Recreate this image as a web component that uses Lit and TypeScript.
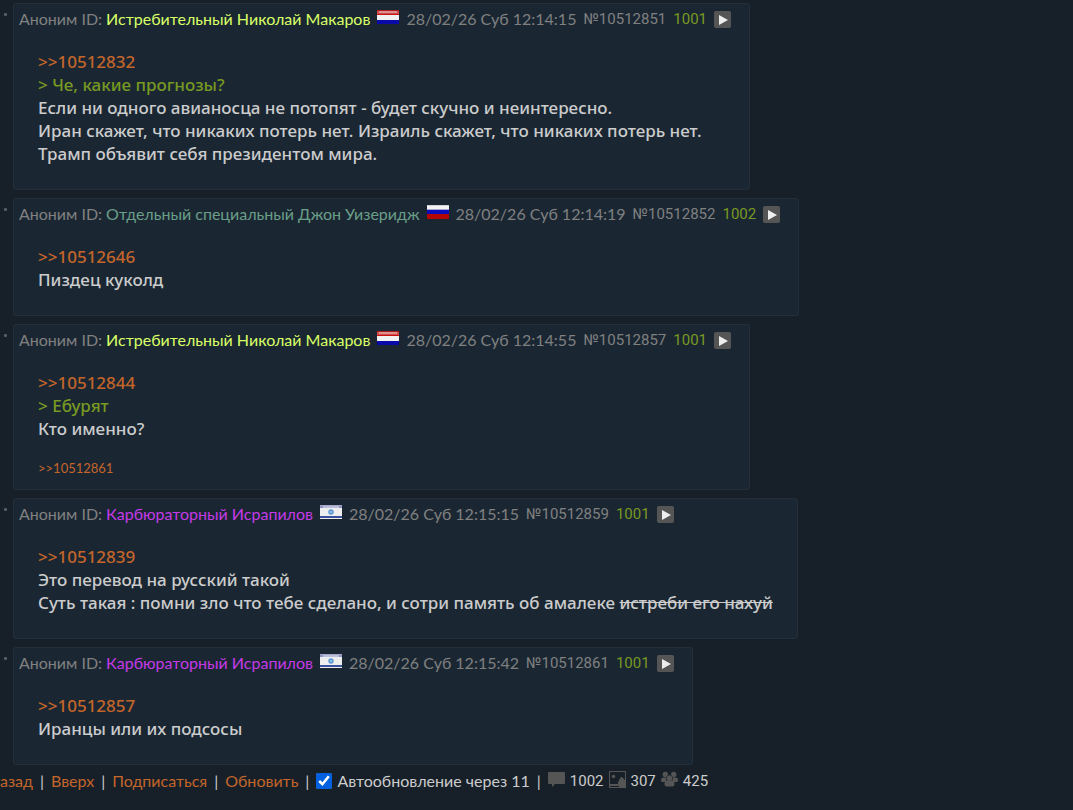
import { LitElement, html, svg, css } from "lit";
import { customElement, property, state } from "lit/decorators.js";
import { classMap } from "lit/directives/class-map.js";

type Kind = "ref" | "quote" | "text";
interface Line { kind: Kind; text: string; struck?: string }
interface Post {
  id: string; order: number; name: string; tone: "lime" | "sage" | "violet";
  flag: "nl" | "ru" | "il"; time: string; lines: Line[]; replies?: string[];
}

const ref = (text: string): Line => ({ kind: "ref", text });
const quote = (text: string): Line => ({ kind: "quote", text });
const text = (t: string, struck?: string): Line => ({ kind: "text", text: t, struck });

const POSTS: Post[] = [
  {
    id: "10512851", order: 1001, name: "Истребительный Николай Макаров", tone: "lime", flag: "nl",
    time: "28/02/26 Суб 12:14:15",
    lines: [
      ref("10512832"),
      quote("Че, какие прогнозы?"),
      text("Если ни одного авианосца не потопят - будет скучно и неинтересно."),
      text("Иран скажет, что никаких потерь нет. Израиль скажет, что никаких потерь нет."),
      text("Трамп объявит себя президентом мира."),
    ],
  },
  {
    id: "10512852", order: 1002, name: "Отдельный специальный Джон Уизеридж", tone: "sage", flag: "ru",
    time: "28/02/26 Суб 12:14:19",
    lines: [ref("10512646"), text("Пиздец куколд")],
  },
  {
    id: "10512857", order: 1001, name: "Истребительный Николай Макаров", tone: "lime", flag: "nl",
    time: "28/02/26 Суб 12:14:55",
    lines: [ref("10512844"), quote("Ебурят"), text("Кто именно?")],
    replies: ["10512861"],
  },
  {
    id: "10512859", order: 1001, name: "Карбюраторный Исрапилов", tone: "violet", flag: "il",
    time: "28/02/26 Суб 12:15:15",
    lines: [
      ref("10512839"),
      text("Это перевод на русский такой"),
      text("Суть такая : помни зло что тебе сделано, и сотри память об амалеке ", "истреби его нахуй"),
    ],
  },
  {
    id: "10512861", order: 1001, name: "Карбюраторный Исрапилов", tone: "violet", flag: "il",
    time: "28/02/26 Суб 12:15:42",
    lines: [ref("10512857"), text("Иранцы или их подсосы")],
  },
];

const FLAGS = {
  nl: svg`<rect width="22" height="5" fill="#d04a4a"/><rect width="22" height="1" fill="#b01c1c"/>
    <rect x="2" y="1" width="18" height="2" fill="#dd8f8f"/><rect y="4" width="22" height="1" fill="#c41414"/>
    <rect y="5" width="22" height="5" fill="#f1f1f1"/><rect y="10" width="22" height="4" fill="#0a0aa8"/>`,
  ru: svg`<rect width="22" height="5" fill="#f3f3f3"/><rect width="22" height="1" fill="#d2d2d2"/>
    <rect y="5" width="22" height="5" fill="#0d0dba"/><rect y="4" width="22" height="1" fill="#a9a9d8"/>
    <rect y="9" width="22" height="5" fill="#b30505"/>`,
  il: svg`<rect width="22" height="14" fill="#eeeeee"/><rect width="22" height="1" fill="#a9a4c4"/>
    <rect y="1" width="22" height="2" fill="#8d93c0"/><rect x="3" y="1" width="16" height="2" fill="#b9bedb"/>
    <rect y="11" width="22" height="2" fill="#3c50a0"/>
    <circle cx="11" cy="7" r="2" fill="#8ebbe6" stroke="#5b96d2" stroke-width="1.4"/>`,
};

@customElement("thread-post")
class ThreadPost extends LitElement {
  @property({ attribute: false }) post!: Post;

  static styles = css`
    :host { display: flex; align-items: flex-start; }
    a { color: #c4652a; text-decoration: none; }
    .mark { width: 3px; height: 3px; margin: 10px 6px 0 4px; flex: none; border-radius: 1px; background: #565d63; }
    .card {
      border: 1px solid #23303c; border-radius: 3px; background: #1a2733;
      padding: 3px 18px 0 5px; min-width: 0;
    }
    .head {
      display: flex; flex-wrap: wrap; align-items: center; column-gap: 7px;
      font: 16px/24px Lato, "Open Sans", sans-serif; color: #808080;
    }
    .who { display: flex; gap: 4px; }
    .lime { color: #d9ff66; }
    .sage { color: #6b9e88; }
    .violet { color: #c43ae6; }
    .flag { width: 22px; height: 14px; display: block; margin-bottom: 4px; }
    .num { font: 15px/24px Roboto, sans-serif; }
    .order { color: #789922; }
    .menu {
      width: 17px; height: 17px; padding: 0; border: 0; border-radius: 2px;
      background: #555; display: block; cursor: pointer;
    }
    .menu svg { display: block; width: 17px; height: 17px; }
    .body {
      margin: 19px 6px 24px 19px; color: #ccc;
      font: 500 17px/23px "Noto Sans", sans-serif;
    }
    .with-replies { margin-bottom: 20px; }
    .line { margin: 0; }
    .quote { color: #789922; }
    .replies { margin: 0 0 13px 19px; font: 13px/16px Lato, sans-serif; }
  `;

  private line(l: Line) {
    if (l.kind === "ref") return html`<p class="line"><a href="#${l.text}">&gt;&gt;${l.text}</a></p>`;
    if (l.kind === "quote") return html`<p class="line quote">&gt; ${l.text}</p>`;
    return html`<p class="line">${l.text}${l.struck ? html`<s>${l.struck}</s>` : ""}</p>`;
  }

  render() {
    const p = this.post;
    return html`
      <span class="mark"></span>
      <article class="card">
        <header class="head">
          <span class="who"><span>Аноним ID:</span><span class=${p.tone}>${p.name}</span></span>
          <svg class="flag" viewBox="0 0 22 14" aria-hidden="true">${FLAGS[p.flag]}</svg>
          <time>${p.time}</time>
          <span class="num">№${p.id}</span>
          <span class="num order">${p.order}</span>
          <button class="menu" type="button" aria-label="Меню поста">
            <svg viewBox="0 0 17 17" aria-hidden="true"><path d="M5 4v10l9-5z" fill="#eee"/></svg>
          </button>
        </header>
        <div class=${classMap({ body: true, "with-replies": !!p.replies })}>${p.lines.map((l) => this.line(l))}</div>
        ${p.replies
          ? html`<div class="replies">${p.replies.map((r) => html`<a href="#${r}">&gt;&gt;${r}</a>`)}</div>`
          : ""}
      </article>`;
  }
}

@customElement("app-root")
class AppRoot extends LitElement {
  @state() private auto = true;

  static styles = css`
    :host { display: block; min-height: 100vh; box-sizing: border-box; padding-top: 3px; background: #172029; overflow-x: hidden; }
    .posts { display: flex; flex-direction: column; gap: 8px; }
    .bar {
      display: flex; flex-wrap: wrap; align-items: center; gap: 7px;
      margin: 4px 0 0 -12px; color: #ccc; font: 16px/24px Lato, "Open Sans", sans-serif;
    }
    .bar a { color: #c4652a; text-decoration: none; }
    .auto, .stats, .stat { display: flex; align-items: center; gap: 5px; }
    .stat { font: 15px/24px Roboto, sans-serif; }
    .auto input { width: 16px; height: 16px; margin: 0; accent-color: #0060df; }
    .icon { width: 17px; height: 17px; display: block; fill: #555; margin-bottom: 3px; }
  `;

  render() {
    const sep = html`<span>|</span>`;
    return html`
      <main class="posts">${POSTS.map((p) => html`<thread-post .post=${p}></thread-post>`)}</main>
      <nav class="bar">
        <a href="#back">Назад</a>${sep}
        <a href="#top">Вверх</a>${sep}
        <a href="#follow">Подписаться</a>${sep}
        <a href="#update">Обновить</a>${sep}
        <label class="auto">
          <input type="checkbox" .checked=${this.auto}
            @change=${(e: Event) => (this.auto = (e.target as HTMLInputElement).checked)} />
          <span>Автообновление через 11</span>
        </label>${sep}
        <span class="stats">
          <span class="stat">
            <svg class="icon" viewBox="0 0 17 17" aria-hidden="true"><path d="M1 1h15a1 1 0 0 1 1 1v10a1 1 0 0 1-1 1H7l-3 3v-3H1a1 1 0 0 1-1-1V2a1 1 0 0 1 1-1z"/></svg>1002
          </span>
          <span class="stat">
            <svg class="icon" viewBox="0 0 17 17" aria-hidden="true"><path d="M0 0h17v17H0zM1 1v12h9v1h6V1zM1 15v1h9v-1z" fill-rule="evenodd"/><circle cx="4.500" cy="5.500" r="1.800"/><path d="M9 13v-2l1-1V9l2-3h1l3 3v5h-6z"/></svg>307
          </span>
          <span class="stat">
            <svg class="icon" viewBox="0 0 17 17" aria-hidden="true"><circle cx="4.300" cy="3.500" r="2.700"/><circle cx="12.700" cy="3.500" r="2.700"/><path d="M0 9Q0 6.500 2.500 6.500h3V11H1Q0 11 0 9zM17 9Q17 6.500 14.500 6.500h-3V11H16Q17 11 17 9z"/><circle cx="8.500" cy="7.200" r="3.200" stroke="#172029" stroke-width=".6"/><path d="M3.500 13q0-3.500 3-3.500h4q3 0 3 3.500 0 2.500-2 2.500h-6q-2 0-2-2.500z"/></svg>425
          </span>
        </span>
      </nav>`;
  }
}
